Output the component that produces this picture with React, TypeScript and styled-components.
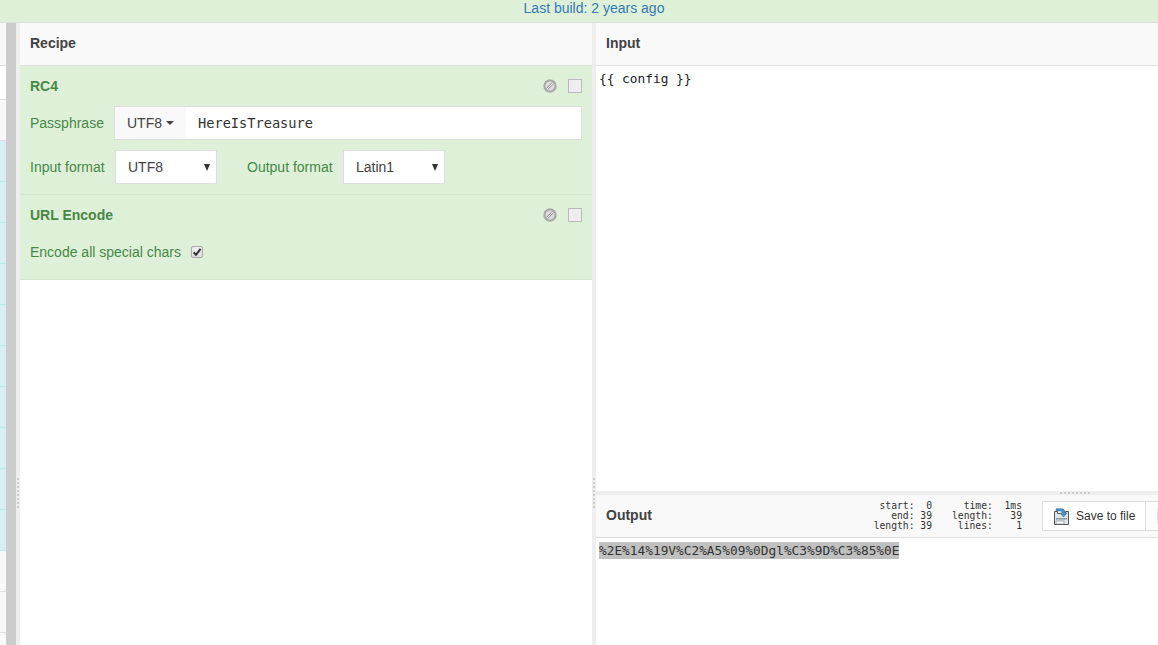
import React from "react";
import styled, { createGlobalStyle } from "styled-components";

const Global = createGlobalStyle`
  html, body { margin: 0; padding: 0; height: 100%; overflow: hidden; background: #fff; }
  #root { height: 100%; }
  * { box-sizing: border-box; }
`;

const MONO = `"DejaVu Sans Mono", "Liberation Mono", monospace`;
const SANS = `"Liberation Sans", Arial, sans-serif`;

const Page = styled.div`
  width: 1158px;
  height: 645px;
  overflow: hidden;
  display: flex;
  flex-direction: column;
  font-family: ${SANS};
  font-size: 14px;
  color: #333;
`;
const Banner = styled.div`
  height: 23px;
  flex: none;
  background: #dff0d8;
  border-bottom: 1px solid #ddd;
  color: #337ab7;
  text-align: center;
  padding-left: 30px;
  line-height: 17px;
`;
const Main = styled.div`
  flex: 1;
  display: flex;
  min-height: 0;
`;
const Strip = styled.div`
  width: 6px;
  flex: none;
  display: flex;
  flex-direction: column;
`;
const StripRow = styled.div<{ $h: number; $tone: "plain" | "white" | "blue" }>`
  height: ${(p) => p.$h}px;
  flex: none;
  background: ${(p) => (p.$tone === "blue" ? "#d9edf7" : p.$tone === "white" ? "#fff" : "#f9f9f9")};
  border-bottom: 1px solid ${(p) => (p.$tone === "blue" ? "#bce8f1" : "#ddd")};
`;
const Scrollbar = styled.div`
  width: 10px;
  flex: none;
  background: #ccc;
`;
const Gutter = styled.div`
  width: 4px;
  flex: none;
  background: #eee;
  display: flex;
  justify-content: center;
  align-items: flex-start;
`;
const GripV = styled.div`
  margin-top: 455px;
  width: 2px;
  height: 31px;
  background: repeating-linear-gradient(to bottom, #ccc 0 2px, transparent 2px 4px);
`;
const GripH = styled.div`
  width: 31px;
  height: 2px;
  background: repeating-linear-gradient(to right, #ccc 0 2px, transparent 2px 4px);
`;
const RecipeCol = styled.div`
  width: 572px;
  flex: none;
  display: flex;
  flex-direction: column;
`;
const RightCol = styled.div`
  width: 640px;
  flex: none;
  display: flex;
  flex-direction: column;
`;
const TitleBar = styled.div`
  height: 43px;
  flex: none;
  background: #f9f9f9;
  border-bottom: 1px solid #ddd;
  padding-left: 10px;
  font-weight: 700;
  line-height: 40px;
  color: #424242;
  display: flex;
  align-items: flex-start;
`;
const Operation = styled.div<{ $h: number }>`
  height: ${(p) => p.$h}px;
  flex: none;
  background: #dff0d8;
  border-bottom: 1px solid #d3e8ca;
  padding: 0 10px;
  color: #468847;
  display: flex;
  flex-direction: column;
`;
const OpHead = styled.div`
  height: 40px;
  flex: none;
  display: flex;
  align-items: center;
  justify-content: space-between;
`;
const OpName = styled.div`
  font-weight: 700;
  color: #468847;
`;
const OpIcons = styled.div`
  display: flex;
  align-items: center;
  gap: 11px;
`;
const Breakpoint = styled.div`
  width: 14px;
  height: 14px;
  background: #eee;
  border: 1px solid #bbb;
`;
const FieldRow = styled.div`
  display: flex;
  align-items: center;
  height: 34px;
  margin-bottom: 10px;
`;
const FieldLabel = styled.div<{ $w: number; $ml?: number }>`
  width: ${(p) => p.$w}px;
  margin-left: ${(p) => p.$ml ?? 0}px;
  flex: none;
`;
const InputGroup = styled.div`
  flex: 1;
  height: 34px;
  border: 1px solid #ddd;
  background: #fff;
  display: flex;
  align-items: center;
`;
const AddOn = styled.div`
  width: 71px;
  height: 32px;
  flex: none;
  background: #f9f9f9;
  color: #424242;
  display: flex;
  align-items: center;
  padding-left: 12px;
  gap: 4px;
`;
const Caret = styled.span`
  width: 0;
  height: 0;
  border-left: 4px solid transparent;
  border-right: 4px solid transparent;
  border-top: 4px solid #424242;
`;
const Key = styled.div`
  margin-left: 12px;
  font-family: ${MONO};
  font-size: 13.65px;
  color: #333;
`;
const SelectBox = styled.div`
  width: 102px;
  height: 34px;
  flex: none;
  border: 1px solid #ddd;
  background: #fff;
  color: #424242;
  padding: 0 6px 0 12px;
  display: flex;
  align-items: center;
  justify-content: space-between;
`;
const SelectArrow = styled.span`
  width: 0;
  height: 0;
  border-left: 3px solid transparent;
  border-right: 3px solid transparent;
  border-top: 7px solid #333;
`;
const CheckRow = styled.div`
  display: flex;
  align-items: center;
  gap: 10px;
  height: 34px;
`;
const CheckMark = styled.div`
  width: 12px;
  height: 12px;
  border: 1px solid #aaa;
  border-radius: 2px;
  background: linear-gradient(#eee, #ddd);
  display: flex;
  align-items: center;
  justify-content: center;
  margin-top: -1px;
`;
const InputPane = styled.div`
  height: 425px;
  flex: none;
  padding: 4px 3px;
  font-family: ${MONO};
  font-size: 12.8px;
  line-height: 17px;
  color: #222;
  white-space: pre;
`;
const HGutter = styled.div`
  height: 4px;
  flex: none;
  background: #eee;
  display: flex;
  padding-left: 464px;
  align-items: center;
`;
const OutputBar = styled(TitleBar)`
  align-items: center;
  line-height: normal;
  padding-right: 10px;
`;
const OutputTitle = styled.div`
  margin-right: auto;
  margin-top: -2px;
`;
const Stats = styled.div`
  display: flex;
  gap: 20px;
  margin-right: 20px;
  font-family: ${MONO};
  font-size: 9.7px;
  font-weight: 400;
  line-height: 10px;
  color: #333;
  white-space: pre;
  text-align: right;
`;
const BtnGroup = styled.div`
  display: flex;
  height: 30px;
  border: 1px solid #ddd;
  background: #fff;
`;
const ToolBtn = styled.div<{ $w: number; $last?: boolean }>`
  width: ${(p) => p.$w}px;
  display: flex;
  align-items: center;
  gap: 6px;
  padding-left: ${(p) => (p.$last ? 11 : 10)}px;
  font-size: 12px;
  font-weight: 400;
  color: #333;
  border-right: ${(p) => (p.$last ? "0" : "1px solid #ddd")};
`;
const OutputPane = styled.div`
  padding: 4px 3px;
  font-family: ${MONO};
  font-size: 12.8px;
  line-height: 17px;
  color: #333;
  white-space: pre;
`;
const Selected = styled.span`
  background: #c0c0c0;
  display: inline-block;
`;

const stripRows: Array<[number, "plain" | "white" | "blue"]> = [
  [43, "plain"], [34, "white"], [41, "plain"],
  [41, "blue"], [41, "blue"], [41, "blue"], [41, "blue"], [41, "blue"],
  [41, "blue"], [41, "blue"], [41, "blue"], [41, "blue"], [41, "blue"],
  [41, "plain"], [41, "plain"], [41, "plain"],
];

const Ban = () => (
  <svg width="14" height="14" viewBox="0 0 14 14">
    <circle cx="7" cy="7" r="5.6" fill="#dcdcdc" stroke="#aaa" strokeWidth="2.2" />
    <path d="M3.8 10.2 10.2 3.8" stroke="#a4a4a4" strokeWidth="2.4" />
    <path d="M3.8 10.2 10.2 3.8" stroke="#eee" strokeWidth="1" />
  </svg>
);

const SaveIcon = () => (
  <svg width="17" height="17" viewBox="0 0 17 17">
    <path d="M1.5 3.5h3v2h8v-2h3v13h-14z" fill="#dfe5ea" stroke="#555" />
    <rect x="3" y="10" width="11" height="1.5" fill="#8a959e" />
    <rect x="3" y="13" width="8" height="3" fill="#fff" stroke="#777" strokeWidth=".6" />
    <path d="M3 .8h5.5c2.5 0 3.5 1.4 3.5 3.4V5h2l-3.5 4L7 5h2v-.5C9 3.3 8.3 3 7.2 3H3z" fill="#4f8fc0" stroke="#2f6a97" strokeWidth=".5" />
  </svg>
);

const PageIcon = () => (
  <svg width="14" height="16" viewBox="0 0 14 16">
    <rect x="1" y="1" width="12" height="14" fill="#e5e9ee" stroke="#b5bcc4" />
  </svg>
);

const Check = () => (
  <svg width="10" height="10" viewBox="0 0 10 10">
    <path d="M1.6 5.4 4 7.8 8.6 1.8" fill="none" stroke="#333" strokeWidth="2" />
  </svg>
);

export default function App() {
  return (
    <Page>
      <Global />
      <Banner>Last build: 2 years ago</Banner>
      <Main>
        <Strip>
          {stripRows.map(([h, tone], i) => (
            <StripRow key={i} $h={h} $tone={tone} />
          ))}
        </Strip>
        <Scrollbar />
        <Gutter><GripV /></Gutter>
        <RecipeCol>
          <TitleBar>Recipe</TitleBar>
          <Operation $h={129}>
            <OpHead>
              <OpName>RC4</OpName>
              <OpIcons><Ban /><Breakpoint /></OpIcons>
            </OpHead>
            <FieldRow>
              <FieldLabel $w={84}>Passphrase</FieldLabel>
              <InputGroup>
                <AddOn>UTF8<Caret /></AddOn>
                <Key>HereIsTreasure</Key>
              </InputGroup>
            </FieldRow>
            <FieldRow>
              <FieldLabel $w={85}>Input format</FieldLabel>
              <SelectBox>UTF8<SelectArrow /></SelectBox>
              <FieldLabel $w={96} $ml={30}>Output format</FieldLabel>
              <SelectBox>Latin1<SelectArrow /></SelectBox>
            </FieldRow>
          </Operation>
          <Operation $h={85}>
            <OpHead>
              <OpName>URL Encode</OpName>
              <OpIcons><Ban /><Breakpoint /></OpIcons>
            </OpHead>
            <CheckRow>
              Encode all special chars
              <CheckMark><Check /></CheckMark>
            </CheckRow>
          </Operation>
        </RecipeCol>
        <Gutter><GripV /></Gutter>
        <RightCol>
          <TitleBar>Input</TitleBar>
          <InputPane>{"{{ config }}"}</InputPane>
          <HGutter><GripH /></HGutter>
          <OutputBar>
            <OutputTitle>Output</OutputTitle>
            <Stats>
              <div>{"start:  0\nend: 39\nlength: 39"}</div>
              <div>{"time:  1ms\nlength:   39\nlines:    1"}</div>
            </Stats>
            <BtnGroup>
              <ToolBtn $w={103}><SaveIcon />Save to file</ToolBtn>
              <ToolBtn $w={79} $last><PageIcon /></ToolBtn>
            </BtnGroup>
          </OutputBar>
          <OutputPane>
            <Selected>%2E%14%19V%C2%A5%09%0Dgl%C3%9D%C3%85%0E</Selected>
          </OutputPane>
        </RightCol>
      </Main>
    </Page>
  );
}
